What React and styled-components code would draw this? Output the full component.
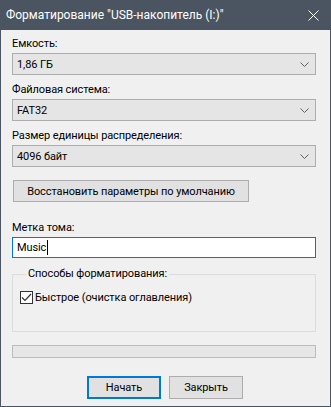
import React from 'react'
import styled, { createGlobalStyle } from 'styled-components'

const Global = createGlobalStyle`
    html, body {
        margin: 0;
        padding: 0;
        background: #f0f0f0;
    }
    * {
        box-sizing: border-box;
    }
`

const Window = styled.div`
    width: 331px;
    height: 407px;
    display: flex;
    flex-direction: column;
    border: 1px solid #4b5461;
    border-top: none;
    background: #f0f0f0;
    font-family: Roboto, "Noto Sans", sans-serif;
    font-size: 11px;
    letter-spacing: -0.1px;
    color: #000;
`

const TitleBar = styled.div`
    height: 30px;
    margin: 0 -1px;
    background: #4b5461;
    color: #fff;
    display: flex;
    align-items: center;
    justify-content: space-between;
    padding: 0 0 0 6px;
    font-size: 12px;
    letter-spacing: 0;
`

const CloseButton = styled.div`
    width: 36px;
    height: 30px;
    display: flex;
    align-items: center;
    justify-content: center;
`

const Body = styled.div`
    flex: 1;
    display: flex;
    flex-direction: column;
    padding: 6px 14px 0 11px;
    white-space: nowrap;
`

const Label = styled.div`
    height: 16px;
    line-height: 16px;
    margin-top: ${p => p.top || 0}px;
`

const Combo = styled.div`
    height: 22px;
    margin-top: 1px;
    background: #e5e5e5;
    border: 1px solid #adadad;
    display: flex;
    align-items: center;
    justify-content: space-between;
    padding: 0 6px 0 4px;
`

const Button = styled.div`
    height: ${p => p.h || 23}px;
    width: ${p => p.w}px;
    background: #e1e1e1;
    border: ${p => (p.primary ? '2px solid #0078d7' : '1px solid #adadad')};
    display: flex;
    align-items: center;
    justify-content: center;
`

const RestoreRow = styled.div`
    margin-top: 13px;
    padding-left: 1px;
`

const TextInput = styled.div`
    height: 21px;
    margin-top: 1px;
    background: #fff;
    border: 1px solid #0078d7;
    display: flex;
    align-items: center;
    padding-left: 4px;
`

const Caret = styled.span`
    display: inline-block;
    width: 1px;
    height: 15px;
    background: #000;
    margin-left: 1px;
`

const Group = styled.fieldset`
    margin: 8px 0 0 0;
    padding: 9px 0 0 7px;
    height: 66px;
    border: 1px solid #dcdcdc;
    legend {
        padding: 0 2px;
        margin-left: 6px;
        line-height: 16px;
    }
`

const CheckRow = styled.label`
    display: flex;
    align-items: center;
    gap: 2px;
`

const CheckBox = styled.span`
    width: 13px;
    height: 13px;
    background: #fff;
    border: 1px solid #333;
    display: flex;
    align-items: center;
    justify-content: center;
`

const Progress = styled.div`
    height: 13px;
    margin-top: 13px;
    background: #e6e6e6;
    border: 1px solid #bcbcbc;
`

const Footer = styled.div`
    margin-top: 18px;
    display: flex;
    justify-content: center;
    gap: 8px;
    padding-left: 2px;
`

const Chevron = () => (
    <svg width="9" height="5" viewBox="0 0 9 5">
        <path d="M0.5 0.5 L4.5 4.5 L8.5 0.5" fill="none" stroke="#606060" strokeWidth="1" />
    </svg>
)

const Select = ({ value }) => (
    <Combo>
        <span>{value}</span>
        <Chevron />
    </Combo>
)

export default function App() {
    return (
        <>
            <Global />
            <Window>
                <TitleBar>
                    <span>Форматирование "USB-накопитель (I:)"</span>
                    <CloseButton>
                        <svg width="11" height="11" viewBox="0 0 11 11">
                            <path d="M0.5 0.5 L10.5 10.5 M10.5 0.5 L0.5 10.5" stroke="#fff" strokeWidth="1" />
                        </svg>
                    </CloseButton>
                </TitleBar>
                <Body>
                    <Label>Емкость:</Label>
                    <Select value="1,86 ГБ" />
                    <Label top={7}>Файловая система:</Label>
                    <Select value="FAT32" />
                    <Label top={7}>Размер единицы распределения:</Label>
                    <Select value="4096 байт" />
                    <RestoreRow>
                        <Button w={236} h={22}>Восстановить параметры по умолчанию</Button>
                    </RestoreRow>
                    <Label top={18}>Метка тома:</Label>
                    <TextInput>
                        Music<Caret />
                    </TextInput>
                    <Group>
                        <legend>Способы форматирования:</legend>
                        <CheckRow>
                            <CheckBox>
                                <svg width="11" height="11" viewBox="0 0 11 11">
                                    <path d="M1 5.5 L4 8.5 L10 2" fill="none" stroke="#333" strokeWidth="1.2" />
                                </svg>
                            </CheckBox>
                            Быстрое (очистка оглавления)
                        </CheckRow>
                    </Group>
                    <Progress />
                    <Footer>
                        <Button w={74} primary>Начать</Button>
                        <Button w={74}>Закрыть</Button>
                    </Footer>
                </Body>
            </Window>
        </>
    )
}
